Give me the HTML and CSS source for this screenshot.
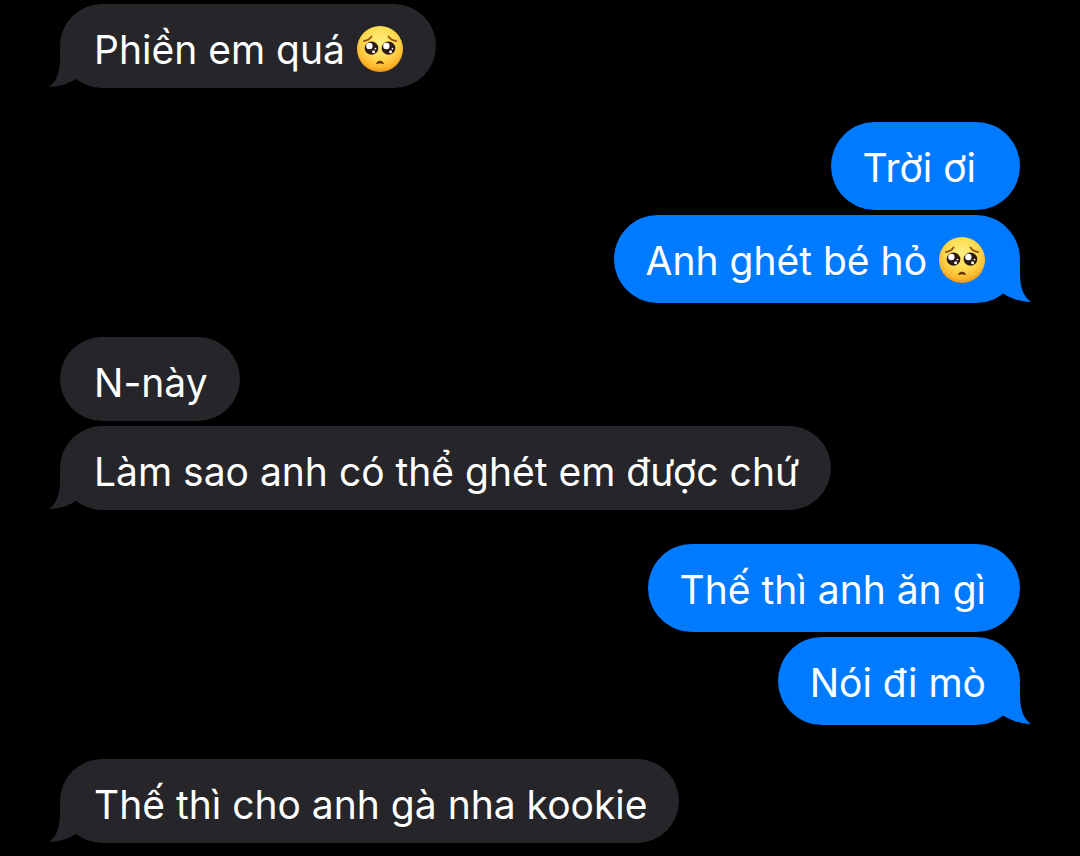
FILE: index.html
```html
<!DOCTYPE html>
<html lang="vi">
<head>
  <meta charset="UTF-8" />
  <meta name="viewport" content="width=device-width, initial-scale=1.0" />
  <title>Tin nhắn</title>
  <link rel="stylesheet" href="styles.css">
</head>
<body>
<svg class="defs" aria-hidden="true">
  <defs>
    <radialGradient id="face" cx="0.5" cy="0.35" r="0.68">
      <stop offset="0" stop-color="#ffee80" />
      <stop offset="0.5" stop-color="#ffdb52" />
      <stop offset="0.8" stop-color="#fdb92e" />
      <stop offset="1" stop-color="#ec8a12" />
    </radialGradient>
    <symbol id="tail" viewBox="0 0 40 40">
      <path d="M11 0V10C11 24 8 33 0 39C9 39 19 36 27 31L40 24V0Z" />
    </symbol>
    <symbol id="pleading" viewBox="0 0 48 48">
      <circle cx="24" cy="24" r="23" fill="url(#face)" />
      <g fill="none" stroke="#91500f" stroke-width="1.8" stroke-linecap="round">
        <path d="M8 16C11.5 15.5 14 14 15.5 11.5" />
        <path d="M40 16C36.5 15.5 34 14 32.5 11.5" />
      </g>
      <path d="M20.5 38.5C21.5 35.5 26.5 35.5 27.5 38.5C25.5 37.7 22.5 37.7 20.5 38.5Z" fill="#5e2d0a" stroke="#5e2d0a" stroke-width="1" />
      <ellipse cx="15.5" cy="23.2" rx="6.8" ry="6.6" fill="#2b1a16" />
      <ellipse cx="32.5" cy="23.2" rx="6.8" ry="6.6" fill="#2b1a16" />
      <g fill="#fff">
        <circle cx="13.4" cy="21" r="3.2" />
        <circle cx="30.4" cy="21" r="3.2" />
        <circle cx="17.6" cy="26.8" r="1.5" />
        <circle cx="34.6" cy="26.8" r="1.5" />
        <circle cx="19.5" cy="23.6" r="0.9" />
        <circle cx="36.5" cy="23.6" r="0.9" />
      </g>
    </symbol>
  </defs>
</svg>

<main class="chat">
  <div class="group received">
    <div class="bubble">Phiền em quá <svg class="emoji" role="img" aria-label="năn nỉ"><use href="#pleading" /></svg><svg class="tail"><use href="#tail" /></svg></div>
  </div>

  <div class="group sent">
    <div class="bubble trailing">Trời ơi</div>
    <div class="bubble">Anh ghét bé hỏ <svg class="emoji" role="img" aria-label="năn nỉ"><use href="#pleading" /></svg><svg class="tail"><use href="#tail" /></svg></div>
  </div>

  <div class="group received">
    <div class="bubble">N-này</div>
    <div class="bubble">Làm sao anh có thể ghét em được chứ<svg class="tail"><use href="#tail" /></svg></div>
  </div>

  <div class="group sent">
    <div class="bubble">Thế thì anh ăn gì</div>
    <div class="bubble">Nói đi mò<svg class="tail"><use href="#tail" /></svg></div>
  </div>

  <div class="group received">
    <div class="bubble">Thế thì cho anh gà nha kookie<svg class="tail"><use href="#tail" /></svg></div>
  </div>
</main>
</body>
</html>
```
FILE: styles.css
```css
body {
  margin: 0;
  background: #000;
  color: #fff;
  font-family: Inter, "Liberation Sans", sans-serif;
  font-size: 39px;
  line-height: 52px;
}
.defs {
  position: absolute;
  width: 0;
  height: 0;
}
.chat {
  display: flex;
  flex-direction: column;
  gap: 34px;
  padding: 4px 60px 12px;
}
.group {
  display: flex;
  flex-direction: column;
  gap: 5px;
}
.received {
  align-items: flex-start;
}
.sent {
  align-items: flex-end;
}
.bubble {
  position: relative;
  box-sizing: border-box;
  max-width: 85%;
  border-radius: 44px;
}
.received .bubble {
  padding: 20px 32px 12px 34px;
  background: #262529;
  fill: #262529;
}
.sent .bubble {
  padding: 20px 34px 16px 32px;
  background: #007aff;
  fill: #007aff;
}
.sent .trailing {
  padding-right: 44px;
}
.emoji {
  width: 48px;
  height: 48px;
  margin: -4px 0;
  vertical-align: -5px;
}
.tail {
  position: absolute;
  bottom: 0;
  width: 40px;
  height: 40px;
}
.received .tail {
  left: -11px;
}
.sent .tail {
  right: -11px;
  transform: scaleX(-1);
}
```
